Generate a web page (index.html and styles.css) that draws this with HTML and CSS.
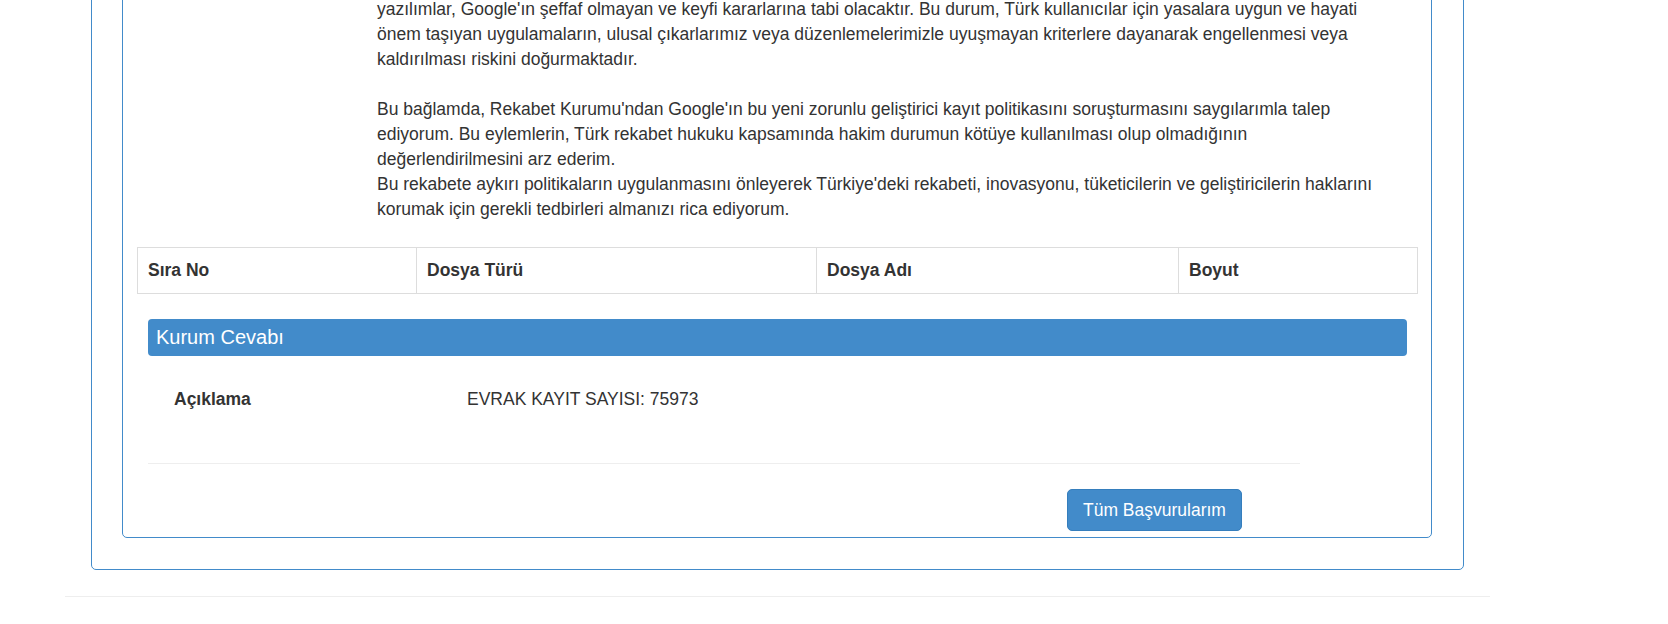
FILE: index.html
```html
<!DOCTYPE html>
<html>

<head>
    <meta charset="utf-8">
    <link rel="stylesheet" href="styles.css">
</head>

<body>
    <div class="page">
        <div class="outer-panel">
            <div class="inner-panel">

                <div class="detail-row">
                    <div class="detail-label"></div>
                    <div class="detail-text">
                        yazılımlar, Google'ın şeffaf olmayan ve keyfi kararlarına tabi olacaktır. Bu durum, Türk kullanıcılar için yasalara uygun ve hayati önem taşıyan uygulamaların, ulusal çıkarlarımız veya düzenlemelerimizle uyuşmayan kriterlere dayanarak engellenmesi veya kaldırılması riskini doğurmaktadır.<br><br>
                        Bu bağlamda, Rekabet Kurumu'ndan Google'ın bu yeni zorunlu geliştirici kayıt politikasını soruşturmasını saygılarımla talep ediyorum. Bu eylemlerin, Türk rekabet hukuku kapsamında hakim durumun kötüye kullanılması olup olmadığının değerlendirilmesini arz ederim.<br>
                        Bu rekabete aykırı politikaların uygulanmasını önleyerek Türkiye'deki rekabeti, inovasyonu, tüketicilerin ve geliştiricilerin haklarını korumak için gerekli tedbirleri almanızı rica ediyorum.
                    </div>
                </div>

                <table class="file-table">
                    <thead>
                        <tr>
                            <th class="col-no">Sıra No</th>
                            <th class="col-type">Dosya Türü</th>
                            <th class="col-name">Dosya Adı</th>
                            <th>Boyut</th>
                        </tr>
                    </thead>
                </table>

                <div class="answer-panel">
                    <div class="answer-heading">Kurum Cevabı</div>
                    <div class="answer-body">
                        <div class="answer-row">
                            <span class="answer-label">Açıklama</span>
                            <span class="answer-value">EVRAK KAYIT SAYISI: 75973</span>
                        </div>
                        <hr class="answer-divider">
                    </div>
                </div>

                <div class="actions">
                    <button type="button" class="btn-primary">Tüm Başvurularım</button>
                </div>

            </div>
        </div>
        <hr class="footer-line">
    </div>
</body>

</html>
```

FILE: styles.css
```css
body {
    margin: 0;
    font-family: "Liberation Sans", Arial, sans-serif;
    font-size: 17.5px;
    line-height: 25px;
    color: #333;
    background-color: #fff;
}

.page {
    width: 1425px;
    margin: -60px 0 0 65px;
}

.outer-panel {
    margin: 0 26px 0 26px;
    padding: 20px 31px 31px 30px;
    border: 1px solid #428bca;
    border-radius: 5px;
}

.inner-panel {
    padding: 35px 13px 6px 14px;
    border: 1px solid #428bca;
    border-radius: 5px;
}

.detail-row {
    display: flex;
}

.detail-label {
    width: 240px;
    flex-shrink: 0;
}

.detail-text {
    width: 1013px;
}

.file-table {
    width: 100%;
    margin-top: 25px;
    border-collapse: collapse;
}

.file-table th {
    padding: 10px;
    border: 1px solid #ddd;
    text-align: left;
    font-weight: bold;
}

.col-no {
    width: 258px;
}

.col-type {
    width: 379px;
}

.col-name {
    width: 341px;
}

.answer-panel {
    margin: 25px 11px 0 11px;
}

.answer-heading {
    padding: 6px 8px;
    font-size: 20px;
    line-height: 25px;
    color: #fff;
    background-color: #428bca;
    border-radius: 4px;
}

.answer-body {
    padding-top: 31px;
}

.answer-row {
    display: flex;
    padding-left: 26px;
}

.answer-label {
    width: 293px;
    font-weight: bold;
}

.answer-divider {
    width: 1152px;
    margin: 51px 0 0 0;
    border: 0;
    border-top: 1px solid #eee;
}

.actions {
    padding: 25px 0 0 930px;
}

.btn-primary {
    height: 42px;
    padding: 7px 15px;
    font-family: inherit;
    font-size: 17.5px;
    line-height: 25px;
    color: #fff;
    background-color: #428bca;
    border: 1px solid #357ebd;
    border-radius: 5px;
    cursor: pointer;
}

.footer-line {
    margin: 26px 0 0 0;
    border: 0;
    border-top: 1px solid #eee;
}
```
